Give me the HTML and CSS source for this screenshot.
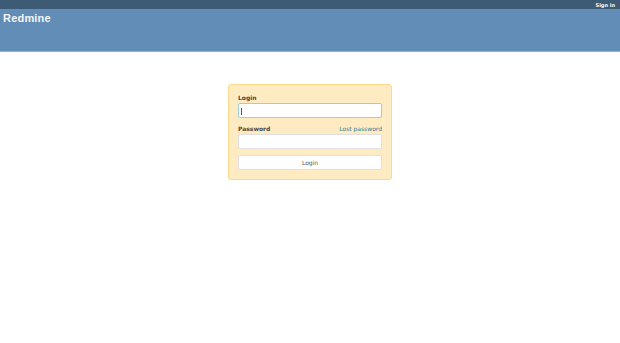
FILE: index.html
```html
<!DOCTYPE html>
<html lang="en">
<head>
    <meta charset="UTF-8">
    <title>Redmine</title>
    <link rel="stylesheet" href="styles.css">
</head>
<body>
    <div class="top-menu">
        <a href="#" class="signin">Sign in</a>
    </div>
    <div class="header">
        <h1>Redmine</h1>
    </div>

    <div class="login-form">
        <label for="username">Login</label>
        <div class="field-wrap">
            <input type="text" id="username" class="field focused">
            <span class="caret"></span>
        </div>

        <div class="row">
            <label for="password">Password</label>
            <a href="#" class="lost">Lost password</a>
        </div>
        <input type="password" id="password" class="field">

        <button class="submit">Login</button>
    </div>
</body>
</html>
```

FILE: styles.css
```css
body {
    margin: 0;
    font-family: "DejaVu Sans", Verdana, sans-serif;
    color: #484848;
    background: #fff;
}
.top-menu {
    height: 9px;
    background-color: #3e5b76;
    display: flex;
    justify-content: flex-end;
    align-items: center;
    padding-right: 5px;
}
.signin {
    color: #fff;
    font-size: 5px;
    font-weight: bold;
    text-decoration: none;
}
.header {
    height: 42px;
    background-color: #628db6;
    border-bottom: 1px solid #8fb2d4;
    padding-left: 3px;
}
.header h1 {
    margin: 0;
    padding-top: 3px;
    font-family: "Liberation Sans", Arial, sans-serif;
    font-size: 11px;
    font-weight: bold;
    color: #f4f6f8;
    letter-spacing: 0.2px;
}
.login-form {
    width: 144px;
    margin: 32px auto 0;
    padding: 8px 9px 9px;
    background-color: #ffebc1;
    border: 1px solid #fdd98b;
    border-radius: 3px;
    font-size: 6px;
}
.login-form label {
    display: block;
    font-weight: bold;
    color: #484848;
    line-height: 9px;
}
.row {
    display: flex;
    justify-content: space-between;
    align-items: center;
    margin-top: 6px;
}
.lost {
    color: #2a7ba0;
    text-decoration: none;
    font-size: 6px;
}
.field-wrap {
    position: relative;
}
.caret {
    position: absolute;
    left: 3px;
    top: 5px;
    width: 1px;
    height: 7px;
    background: #555;
}
.field {
    display: block;
    box-sizing: border-box;
    width: 100%;
    height: 15px;
    margin: 1px 0 0;
    border: 1px solid #e0e0e0;
    border-radius: 2px;
    background: #fff;
    padding: 0 3px;
}
.field.focused {
    border-color: #9ccfd8;
}
.submit {
    display: block;
    box-sizing: border-box;
    width: 100%;
    height: 15px;
    margin-top: 6px;
    border: 1px solid #e0e0e0;
    border-radius: 2px;
    background: #fff;
    font-family: "DejaVu Sans", Verdana, sans-serif;
    font-size: 6px;
    color: #555;
    padding: 0;
}
```
